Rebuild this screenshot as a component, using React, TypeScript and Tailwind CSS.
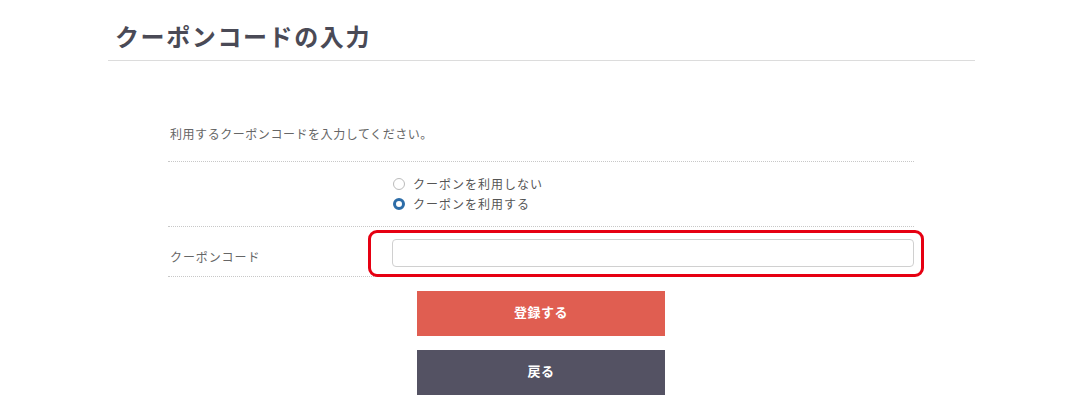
const font = { fontFamily: '"Noto Sans CJK JP", "Noto Sans", sans-serif' };

function Radio({ checked, label }: { checked?: boolean; label: string }) {
	return (
		<label className="flex items-center h-5 text-[12px] tracking-[1px] text-[#555]">
			<span
				className={
					checked
						? "w-3 h-3 rounded-full border-[3.5px] border-[#2d6da8] bg-white"
						: "w-3 h-3 rounded-full border border-[#bbb] bg-white"
				}
			/>
			<span className="ml-2">{label}</span>
		</label>
	);
}

export default function App() {
	return (
		<div className="bg-white w-[1070px] h-[402px] overflow-hidden" style={font}>
			{/* Page header */}
			<div className="ml-[108px] w-[867px] border-b border-[#dcdcdc] pt-[19px] pb-[8px] pl-[7px]">
				<h1 className="text-[24px] font-bold tracking-[1.6px] text-[#4a4a56] leading-[33px]">
					クーポンコードの入力
				</h1>
			</div>

			{/* Form */}
			<div className="ml-[168px] w-[746px] mt-[64px]">
				<p className="text-[12px] tracking-[0.55px] text-[#666] pl-[2px] pb-[18px] leading-[18px]">
					利用するクーポンコードを入力してください。
				</p>

				<div className="flex border-t border-dotted border-[#c8c8c8] h-[65px]">
					<div className="w-[224px]" />
					<div className="pt-[12px] pl-[1px]">
						<Radio label="クーポンを利用しない" />
						<Radio checked label="クーポンを利用する" />
					</div>
				</div>

				<div className="flex border-t border-b border-dotted border-[#c8c8c8] h-[51px]">
					<div className="w-[224px] pl-[2px] pt-[21px] text-[12px] tracking-[0.9px] text-[#666]">
						クーポンコード
					</div>
					<div className="relative flex-1 pt-[12px]">
						<input
							type="text"
							className="block w-[522px] h-[28px] border border-[#d0d0d0] rounded-[4px] bg-white outline-none"
						/>
						<div className="absolute left-[-24px] top-[3px] w-[556px] h-[47px] border-[3px] border-[#e60012] rounded-[9px] pointer-events-none" />
					</div>
				</div>

				<div className="flex flex-col items-center pt-[14px] gap-[14px]">
					<button className="w-[248px] h-[45px] pb-[3px] bg-[#e05e51] text-white text-[13px] font-bold tracking-[0.5px]">
						登録する
					</button>
					<button className="w-[248px] h-[45px] pb-[3px] bg-[#545263] text-white text-[13px] font-bold tracking-[0.5px]">
						戻る
					</button>
				</div>
			</div>
		</div>
	);
}
